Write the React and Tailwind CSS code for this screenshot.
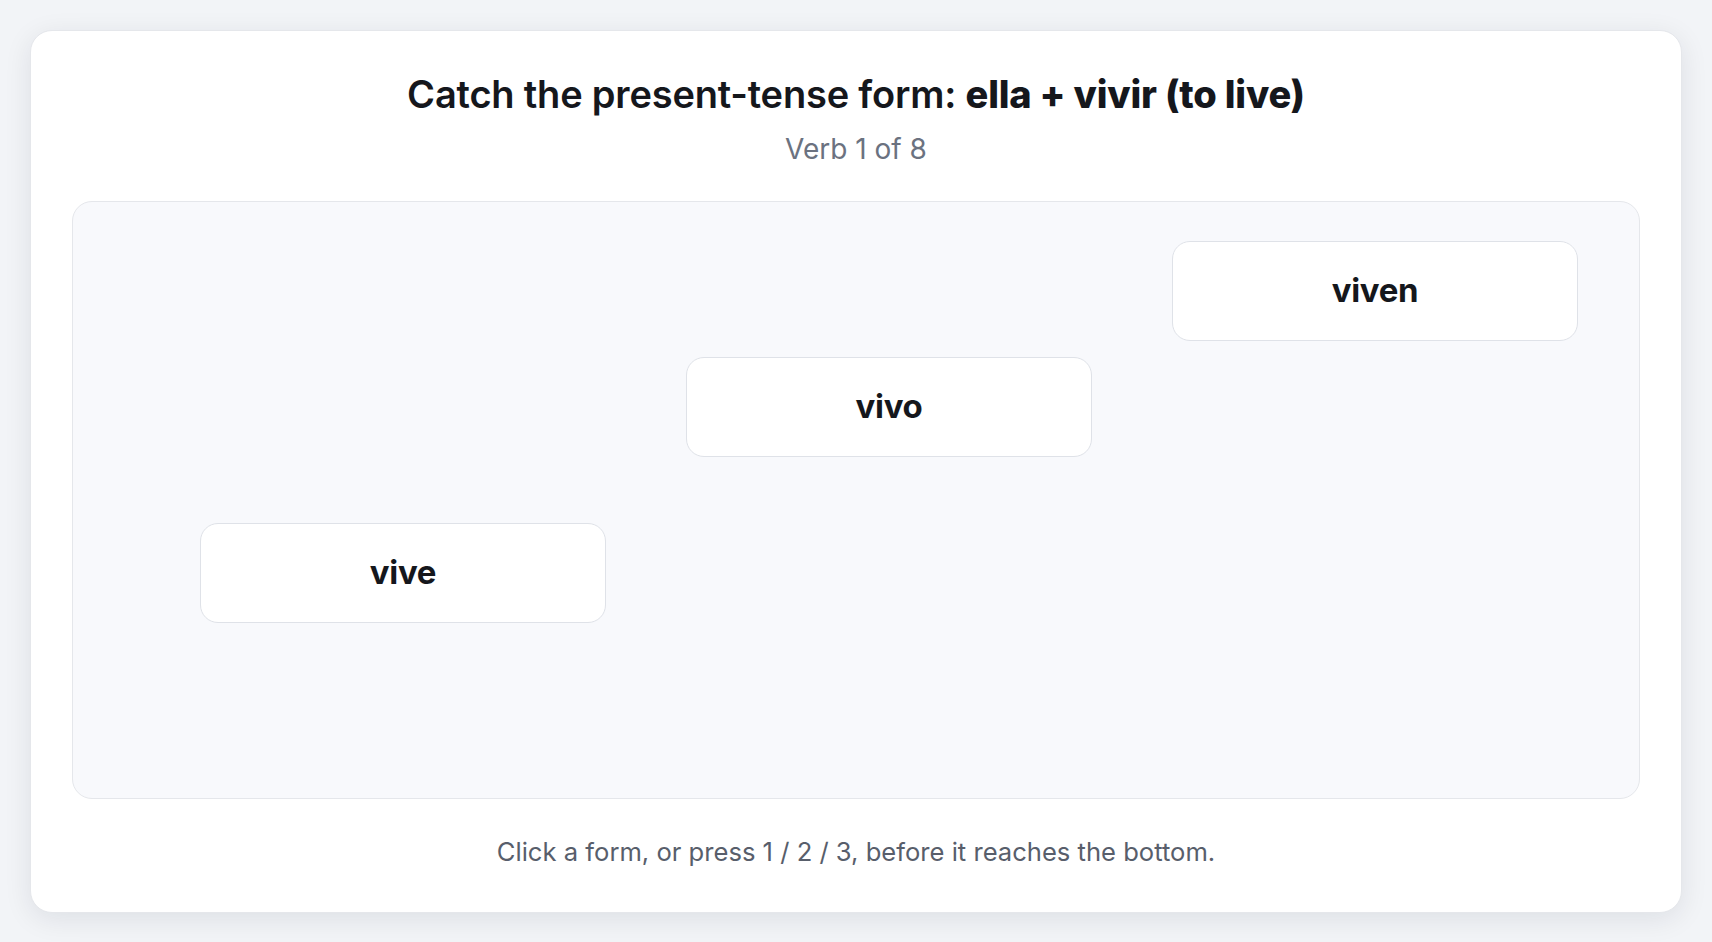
import React from "react";

const forms = [
  { id: 3, label: "viven", left: 1099, top: 39 },
  { id: 1, label: "vivo", left: 613, top: 155 },
  { id: 2, label: "vive", left: 127, top: 321 },
];

function FallingForm({ form }) {
  return (
    <button
      className="absolute w-[406px] h-[100px] bg-white border border-[#dfe2e8] rounded-[18px] flex items-center justify-center text-[33px] font-bold text-[#15171c] tracking-[-0.01em]"
      style={{ left: form.left, top: form.top }}
    >
      {form.label}
    </button>
  );
}

export default function App() {
  return (
    <div className="min-h-screen bg-[#f2f4f7] p-[30px] font-['Inter','Liberation_Sans',sans-serif]">
      <div className="bg-white rounded-[22px] border border-[#e5e7eb] shadow-[0_6px_28px_rgba(15,23,42,0.09)] px-[41px] pt-[40px] pb-[41px]">
        <h1 className="text-center text-[38px] leading-[46px] font-semibold text-[#15171c] tracking-[-0.005em]">
          Catch the present-tense form:{" "}
          <span className="font-extrabold">ella + vivir (to live)</span>
        </h1>
        <p className="mt-[14px] text-center text-[28px] leading-[36px] text-[#6b7280]">
          Verb 1 of 8
        </p>

        <div className="relative mt-[34px] h-[598px] bg-[#f8f9fc] border border-[#e5e7eb] rounded-[20px] overflow-hidden">
          {forms.map((f) => (
            <FallingForm key={f.id} form={f} />
          ))}
        </div>

        <p className="mt-[33px] text-center text-[25.6px] leading-[39px] text-[#585e6b]">
          Click a form, or press 1 / 2 / 3, before it reaches the bottom.
        </p>
      </div>
    </div>
  );
}
